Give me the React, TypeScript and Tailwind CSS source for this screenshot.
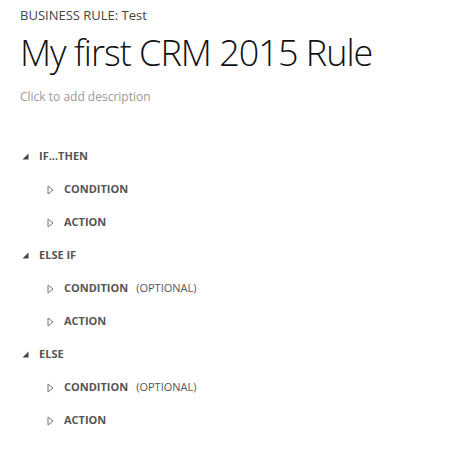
import React from "react"

type Child = { label: string; optional?: boolean }
type Section = { label: string; children: Child[] }

const sections: Section[] = [
  { label: "IF...THEN", children: [{ label: "CONDITION" }, { label: "ACTION" }] },
  { label: "ELSE IF", children: [{ label: "CONDITION", optional: true }, { label: "ACTION" }] },
  { label: "ELSE", children: [{ label: "CONDITION", optional: true }, { label: "ACTION" }] },
]

function Expanded() {
  return (
    <svg width="7" height="7" viewBox="0 0 7 7" className="shrink-0">
      <path d="M6.5 0.5 L6.5 6.5 L0.5 6.5 Z" fill="#444" />
    </svg>
  )
}

function Collapsed() {
  return (
    <svg width="7" height="10" viewBox="0 0 7 10" className="shrink-0">
      <path d="M1 1 L6 5 L1 9 Z" fill="none" stroke="#777" strokeWidth="1" />
    </svg>
  )
}

export default function App() {
  return (
    <div className="h-[465px] w-[465px] bg-white pl-5 pt-[7px] font-['Segoe_UI','Open_Sans',sans-serif] text-[#333]">
      <div className="text-[13px] leading-4 text-[#444]">BUSINESS RULE: Test</div>
      <h1 className="mt-[8px] text-[36px] font-light leading-[44px] tracking-[-1px] text-[#111]">
        My first CRM 2015 Rule
      </h1>
      <div className="mt-[14px] text-[12px] leading-4 text-[#999]">Click to add description</div>

      <div className="mt-[35px] flex flex-col">
        {sections.map((s) => (
          <div key={s.label} className="flex flex-col">
            <div className="flex h-[33px] items-center pl-[2px]">
              <Expanded />
              <span className="ml-[10px] text-[11px] font-bold text-[#555]">{s.label}</span>
            </div>
            {s.children.map((c) => (
              <div key={c.label} className="flex h-[33px] items-center pl-[27px]">
                <Collapsed />
                <span className="ml-[10px] text-[11px] font-bold text-[#555]">{c.label}</span>
                {c.optional && <span className="ml-[8px] text-[11px] text-[#555]">(OPTIONAL)</span>}
              </div>
            ))}
          </div>
        ))}
      </div>
    </div>
  )
}
